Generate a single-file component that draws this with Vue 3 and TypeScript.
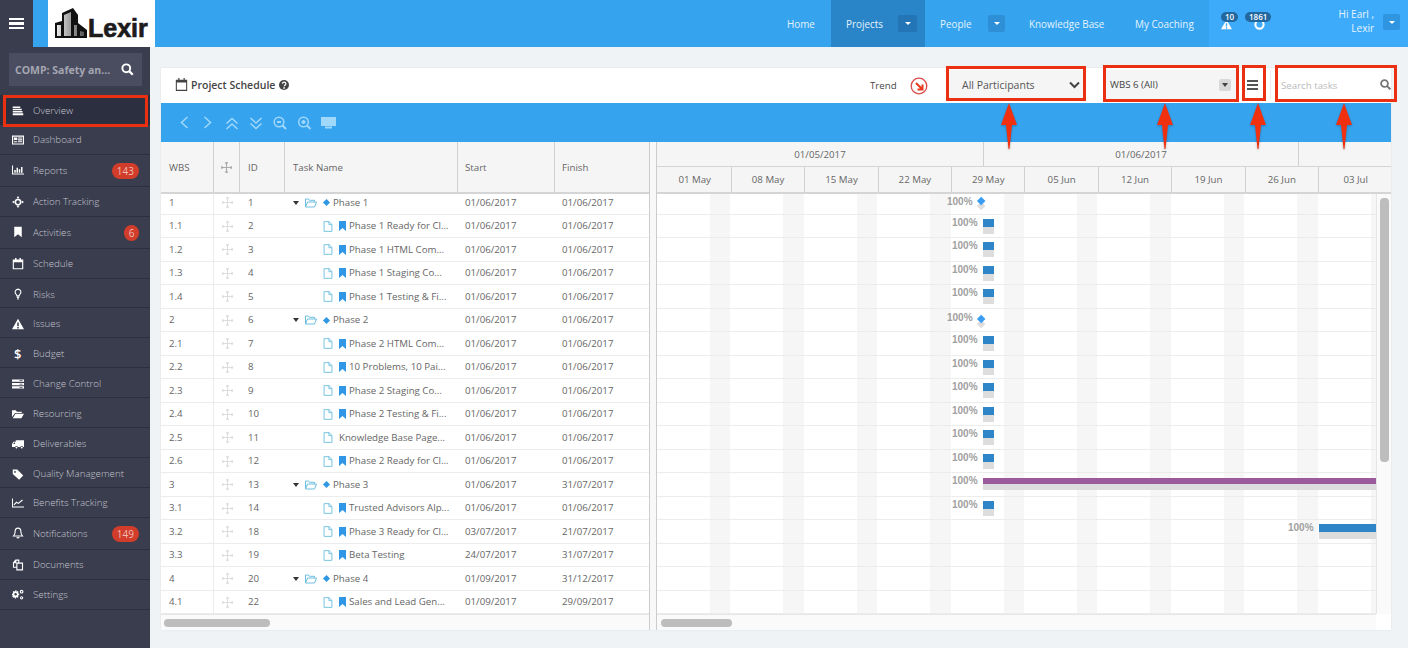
<script setup lang="ts">
interface Nav { label: string; badge?: string; f?: string; s?: string; glyph?: string; active?: boolean }
const nav: Nav[] = [
  { label: 'Overview', active: true, f: 'M1 2h10v2H1zM1 5h12v2H1zM1 8h13v2H1zM1 11h14v2.500H1z' },
  { label: 'Dashboard', f: 'M0 2h16v12H0zM1.500 3.500v9h13v-9zM2.500 4.500h4.500v3.500H2.500zM8 4.500h5.500v1.500H8zM8 7h5.500v1.500H8zM2.500 9.500h4.500v1.500H2.500zM8 9.500h5.500v1.500H8z' },
  { label: 'Reports', badge: '143', f: 'M0 2h1.400v10.600H16V14H0zM3 8h2v3.500H3zM6 5h2v6.500H6zM9 7h2v4.500H9zM12 4h2v7.500h-2z' },
  { label: 'Action Tracking', f: 'M8 0l2 3H6zM8 16l-2-3h4zM0 8l3-2v4zM16 8l-3 2V6zM8 3.500a4.500 4.500 0 1 1 0 9 4.500 4.500 0 0 1 0-9zM8 5.500a2.500 2.500 0 1 0 0 5 2.500 2.500 0 0 0 0-5z' },
  { label: 'Activities', badge: '6', f: 'M3 1h10v14l-5-4-5 4z' },
  { label: 'Schedule', f: 'M4 0h2v2h4V0h2v2h3v13H1V2h3zM2.500 5.500v8h11v-8z' },
  { label: 'Risks', s: 'M8 1.500a4 4 0 0 1 2.500 7c-.7.700-1 1.200-1 2h-3c0-.8-.3-1.300-1-2A4 4 0 0 1 8 1.500zM6.500 12.500h3M7 14.500h2' },
  { label: 'Issues', f: 'M8 1l8 14H0zM7 6v5h2V6zM7 12v2h2v-2z' },
  { label: 'Budget', glyph: '$' },
  { label: 'Change Control', f: 'M0 2h16v3H0zM0 6.500h16v3H0zM0 11h16v3H0zM10 3h4v1h-4zM10 7.500h4v1h-4zM10 12h4v1h-4z' },
  { label: 'Resourcing', f: 'M0 3h5l1.500 2H13v1.500H4L0 12zM4.600 7.500H16L12.500 13.500H1z' },
  { label: 'Deliverables', f: 'M5 3h11v9h-1.100a2 2 0 0 0-3.800 0H7.900a2 2 0 0 0-3.800 0H0V8l2-3h3zM1.500 8H4V6H3zM6 11.500a1.300 1.300 0 1 1 0 2.600 1.300 1.300 0 0 1 0-2.600zM13 11.500a1.300 1.300 0 1 1 0 2.600 1.300 1.300 0 0 1 0-2.600z' },
  { label: 'Quality Management', f: 'M1 2h6l8 8-5.500 5.500L1 8zM4 4a1.200 1.200 0 1 0 0 2.400A1.200 1.200 0 0 0 4 4z' },
  { label: 'Benefits Tracking', f: 'M0 2h1.300v10.700H16V14H0z', s: 'M2.500 10.500L6 7l2.500 1.500L14 4' },
  { label: 'Notifications', badge: '149', s: 'M8 1.500c2.500 0 3.800 2 3.800 4.500 0 3 1 4.500 2.200 6H2c1.200-1.500 2.200-3 2.200-6 0-2.500 1.300-4.500 3.800-4.500zM6.500 13.500c.3 1.300 2.700 1.300 3 0' },
  { label: 'Documents', s: 'M6.500 5.500h7.500v9H6.500zM6.500 11H2V5l3-3.500h4v4M5 1.500V5H2' },
  { label: 'Settings', f: 'M5.500 3l1 .4 1-.7 1.300 1.300-.7 1 .4 1 1.200.3v1.800l-1.200.3-.4 1 .7 1-1.300 1.300-1-.7-1 .4-.3 1.200H3.900l-.3-1.200-1-.4-1 .7-1.300-1.300.7-1-.4-1L0 8V6.200l1.200-.3.400-1-.7-1L2.200 2.600l1 .7 1-.4.300-1.200h1.800zM4.800 5.400a1.700 1.700 0 1 0 0 3.400 1.700 1.700 0 0 0 0-3.400zM12.800 1a2 2 0 1 1 0 5 2 2 0 0 1 0-5zM12.800 2.500a1 1 0 1 0 0 2 1 1 0 0 0 0-2zM12.800 9.500a2.200 2.200 0 1 1 0 4.400 2.200 2.200 0 0 1 0-4.400zM12.800 11a.8.800 0 1 0 0 1.500.8.800 0 0 0 0-1.500z' },
]
interface Row { wbs: string; id: number; name: string; start: string; finish: string; group?: boolean; plain?: boolean; kind: 'm' | 't' | 'p' | 'n'; left?: number; width?: number }
const t = (wbs: string, id: number, name: string, start = '01/06/2017', finish = '01/06/2017', plain = false): Row =>
  ({ wbs, id, name, start, finish, plain, kind: 't', left: 326, width: 11 })
const rows: Row[] = [
  { wbs: '1', id: 1, name: 'Phase 1', start: '01/06/2017', finish: '01/06/2017', group: true, kind: 'm', left: 326 },
  t('1.1', 2, 'Phase 1 Ready for Cl...'),
  t('1.2', 3, 'Phase 1 HTML Com...'),
  t('1.3', 4, 'Phase 1 Staging Co...'),
  t('1.4', 5, 'Phase 1 Testing & Fi...'),
  { wbs: '2', id: 6, name: 'Phase 2', start: '01/06/2017', finish: '01/06/2017', group: true, kind: 'm', left: 326 },
  t('2.1', 7, 'Phase 2 HTML Com...'),
  t('2.2', 8, '10 Problems, 10 Pai...'),
  t('2.3', 9, 'Phase 2 Staging Co...'),
  t('2.4', 10, 'Phase 2 Testing & Fi...'),
  t('2.5', 11, 'Knowledge Base Page...', '01/06/2017', '01/06/2017', true),
  t('2.6', 12, 'Phase 2 Ready for Cl...'),
  { wbs: '3', id: 13, name: 'Phase 3', start: '01/06/2017', finish: '31/07/2017', group: true, kind: 'p', left: 326, width: 400 },
  t('3.1', 14, 'Trusted Advisors Alp...'),
  { ...t('3.2', 18, 'Phase 3 Ready for Cl...', '03/07/2017', '21/07/2017'), left: 662, width: 80 },
  { wbs: '3.3', id: 19, name: 'Beta Testing', start: '24/07/2017', finish: '31/07/2017', kind: 'n' },
  { wbs: '4', id: 20, name: 'Phase 4', start: '01/09/2017', finish: '31/12/2017', group: true, kind: 'n' },
  { wbs: '4.1', id: 22, name: 'Sales and Lead Gen...', start: '01/09/2017', finish: '29/09/2017', kind: 'n' },
]
const weeks = ['01 May', '08 May', '15 May', '22 May', '29 May', '05 Jun', '12 Jun', '19 Jun', '26 Jun', '03 Jul']
const arrows = [1009, 1165, 1258, 1344]
</script>

<template>
  <div class="app">
    <header class="top">
      <button class="burger" aria-label="menu"><i></i><i></i><i></i></button>
      <div class="logo">
        <svg width="32" height="30" viewBox="0 0 32 30">
          <defs>
            <linearGradient id="tower" x1="0" x2="1" y1="0" y2="0">
              <stop offset="0" stop-color="#e8e8e8" />
              <stop offset="1" stop-color="#555" />
            </linearGradient>
          </defs>
          <path fill="#111" d="M0 30V15l7-2V5L18 0l5 7v8l9 7v8z" />
          <path fill="url(#tower)" d="M2 28V17h4v11zM9 28V7l7-3v24zM19 28V17h3v11zM25 28v-5l4 1v4z" />
        </svg>
        <span class="logo-text">Lexir</span>
      </div>
      <nav class="links">
        <a class="link home">Home</a>
        <a class="link projects">Projects<span class="caret-btn"><b></b></span></a>
        <a class="link people">People<span class="caret-btn"><b></b></span></a>
        <a class="link kb">Knowledge Base</a>
        <a class="link coach">My Coaching</a>
      </nav>
      <div class="user">
        <div class="alert">
          <svg width="11" height="11" viewBox="0 0 16 16"><path fill="#fff" d="M8 1l8 14H0zM7 6v5h2V6zM7 12v2h2v-2z" /></svg>
          <span class="pill">10</span>
        </div>
        <div class="alert second">
          <svg width="11" height="11" viewBox="0 0 16 16"><circle cx="8" cy="8" r="6" fill="none" stroke="#fff" stroke-width="3" /></svg>
          <span class="pill">1861</span>
        </div>
        <div class="hi">Hi Earl ,<br />Lexir</div>
        <span class="caret-btn user-caret"><b></b></span>
      </div>
    </header>

    <div class="body">
      <aside class="side">
        <div class="comp">
          <span>COMP: Safety an...</span>
          <svg width="13" height="13" viewBox="0 0 16 16"><circle cx="6.500" cy="6.500" r="4.800" fill="none" stroke="#fff" stroke-width="2.400" /><path d="M10 10l4.500 4.500" stroke="#fff" stroke-width="2.800" /></svg>
        </div>
        <ul class="menu">
          <li v-for="n in nav" :key="n.label" :class="{ active: n.active, tall: n.badge }">
            <span class="mi">
              <span v-if="n.glyph" class="glyph">{{ n.glyph }}</span>
              <svg v-else width="12" height="12" viewBox="0 0 16 16">
                <path v-if="n.f" :d="n.f" fill="#fff" fill-rule="evenodd" />
                <path v-if="n.s" :d="n.s" fill="none" stroke="#fff" stroke-width="1.500" />
              </svg>
            </span>
            <span class="ml">{{ n.label }}</span>
            <span v-if="n.badge" class="badge" :class="{ round: n.badge.length === 1 }">{{ n.badge }}</span>
          </li>
        </ul>
      </aside>

      <main class="content">
        <section class="card">
          <div class="head">
            <svg class="cal" width="13" height="13" viewBox="0 0 16 16"><path fill="#444" fill-rule="evenodd" d="M4 0h1.500v2h5V0H12v2h3v14H1V2h3zM2.300 5.500v9h11.400v-9z" /></svg>
            <span class="title">Project Schedule</span>
            <svg class="help" width="10" height="10" viewBox="0 0 16 16"><circle cx="8" cy="8" r="8" fill="#444" /><path d="M5.500 6c0-3.500 5.500-3.500 5.500 0 0 2-2.500 2-2.500 4" fill="none" stroke="#fff" stroke-width="2" /><rect x="7" y="11.500" width="2.500" height="2.500" fill="#fff" /></svg>
            <span class="trend">Trend</span>
            <svg class="trend-ico" width="18" height="18" viewBox="0 0 18 18"><circle cx="9" cy="9" r="7.800" fill="none" stroke="#dc4a4a" stroke-width="1.300" /><path d="M6 6l5.500 5.500M12.500 7.500v5H7.500" fill="none" stroke="#e8391c" stroke-width="2" /></svg>
            <div class="sel parts">
              <span>All Participants</span>
              <svg width="11" height="8" viewBox="0 0 11 8"><path d="M1 1.500l4.500 4.500L10 1.500" fill="none" stroke="#444" stroke-width="2" /></svg>
            </div>
            <div class="sel wbs">
              <span>WBS 6 (All)</span>
              <span class="wbs-btn"><b></b></span>
            </div>
            <div class="lines"><i></i><i></i><i></i></div>
            <div class="find">
              <span>Search tasks</span>
              <svg width="11" height="11" viewBox="0 0 16 16"><circle cx="6.500" cy="6.500" r="5" fill="none" stroke="#777" stroke-width="2.600" /><path d="M10 10l5 5" stroke="#777" stroke-width="3" /></svg>
            </div>
          </div>

          <div class="bar">
            <svg width="160" height="18" viewBox="0 0 160 18" fill="none" stroke="#a0d8fc" stroke-width="1.500">
              <path d="M9.500 3L3.500 8.500l6 5.500M26.500 3l6 5.500-6 5.500" />
              <path d="M48.500 9.500L54 4.500l5.500 5M48.500 15L54 10l5.500 5M72.500 4l5.500 5 5.500-5M72.500 9.500l5.500 5 5.500-5" />
              <circle cx="101" cy="8" r="4.800" /><path d="M104.500 11.500l3.500 3.500M99 8h4" stroke-width="2" />
              <circle cx="125.500" cy="8" r="4.800" /><path d="M129 11.500l3.500 3.500M123.500 8h4M125.500 6v4" stroke-width="2" />
              <path d="M143 3h15v9h-15z" fill="#a0d8fc" stroke="none" /><path d="M147 13.500h7" stroke-width="2" />
            </svg>
          </div>

          <div class="grids">
            <div class="left">
              <div class="cols thead">
                <div>WBS</div>
                <div class="c">
                  <svg class="move" width="11" height="11" viewBox="0 0 12 12"><path d="M6 0v12M0 6h12M4.500 1.500L6 0l1.500 1.500M4.500 10.500L6 12l1.500-1.500M1.500 4.500L0 6l1.500 1.500M10.500 4.500L12 6l-1.500 1.500" fill="none" stroke="#aaa" stroke-width="1.200" /></svg>
                </div>
                <div>ID</div>
                <div>Task Name</div>
                <div class="d">Start</div>
                <div class="d">Finish</div>
              </div>
              <div class="tbody">
                <div v-for="r in rows" :key="r.id" class="cols trow">
                  <div>{{ r.wbs }}</div>
                  <div class="c">
                    <svg width="11" height="11" viewBox="0 0 12 12"><path d="M6 0v12M0 6h12M4.500 1.500L6 0l1.500 1.500M4.500 10.500L6 12l1.500-1.500M1.500 4.500L0 6l1.500 1.500M10.500 4.500L12 6l-1.500 1.500" fill="none" stroke="#ddd" stroke-width="1.200" /></svg>
                  </div>
                  <div>{{ r.id }}</div>
                  <div class="task" :class="{ group: r.group }">
                    <template v-if="r.group">
                      <span class="tri"></span>
                      <svg class="folder" width="12" height="10" viewBox="0 0 12 10"><path d="M.5 9V1h3l1 1.300h5v1.500M.5 9L2.500 4h9L9.500 9z" fill="none" stroke="#6cbfe0" stroke-width="1" /></svg>
                      <span class="dia"></span>
                    </template>
                    <template v-else>
                      <svg class="file" width="10" height="11" viewBox="0 0 10 12"><path d="M.7.700h5.500L9.300 3.800v7.500H.7zM6 .7V4h3.300" fill="none" stroke="#6cbfe0" stroke-width="1" /></svg>
                      <svg v-if="!r.plain" class="mark" width="7" height="10" viewBox="0 0 7 10"><path d="M0 0h7v10L3.500 7 0 10z" fill="#2f97e6" /></svg>
                    </template>
                    <span class="tname">{{ r.name }}</span>
                  </div>
                  <div class="d">{{ r.start }}</div>
                  <div class="d">{{ r.finish }}</div>
                </div>
              </div>
              <div class="hscroll"><span class="thumb lt"></span></div>
            </div>

            <div class="split"></div>

            <div class="right">
              <div class="ghead">
                <div class="months">
                  <div class="m1">01/05/2017</div>
                  <div class="m2">01/06/2017</div>
                  <div class="m3"></div>
                </div>
                <div class="weeks">
                  <div v-for="w in weeks" :key="w">{{ w }}</div>
                </div>
              </div>
              <div class="gwrap">
                <div class="gantt">
                  <div class="gbody">
                    <div v-for="r in rows" :key="r.id" class="grow">
                      <template v-if="r.kind === 'm'">
                        <span class="pct ms" :style="{ left: (r.left! - 36) + 'px' }">100%</span>
                        <span class="gdia shade" :style="{ left: (r.left! - 4.7) + 'px' }"></span>
                        <span class="gdia" :style="{ left: (r.left! - 4.7) + 'px' }"></span>
                      </template>
                      <template v-else-if="r.kind !== 'n'">
                        <span class="pct" :style="{ left: (r.left! - 31) + 'px' }">100%</span>
                        <span class="gbar" :class="r.kind === 'p' ? 'purple' : 'blue'" :style="{ left: r.left + 'px', width: r.width + 'px' }"></span>
                      </template>
                    </div>
                  </div>
                  <div class="hscroll"><span class="thumb rt"></span></div>
                </div>
                <div class="vscroll">
                  <div class="vtrack"><span class="vthumb"></span></div>
                  <div class="corner"></div>
                </div>
              </div>
            </div>
          </div>
        </section>
      </main>
    </div>

    <div class="mark-box b0"></div>
    <div class="mark-box b1"></div>
    <div class="mark-box b2"></div>
    <div class="mark-box b3"></div>
    <div class="mark-box b4"></div>
    <svg v-for="a in arrows" :key="a" class="arrow" :style="{ left: (a - 10) + 'px' }" width="20" height="46" viewBox="0 0 20 46">
      <path d="M10 0l8 22h-5l-2.500 24h-1L7 22H2z" fill="#f0300f" />
    </svg>
  </div>
</template>

<style>
html, body { margin: 0; background: #f0f3f6; }
</style>

<style scoped>
.app { position: relative; width: 1408px; height: 648px; overflow: hidden; font-family: "Open Sans", sans-serif; font-size: 9.700px; color: #666; background: #f0f3f6; }
.top { display: flex; height: 47px; background: #36a3ee; color: #fff; }
.burger { width: 33px; height: 47px; padding: 0; border: 0; background: #3a3d4e; display: flex; flex-direction: column; gap: 2px; align-items: center; justify-content: center; }
.burger i { display: block; width: 15px; height: 2.500px; background: #fff; }
.logo { width: 107px; margin-left: 15px; background: #fff; display: flex; align-items: flex-end; padding: 0 0 9px 7px; box-sizing: border-box; gap: 1px; }
.logo-text { font-family: "Liberation Sans", sans-serif; font-weight: 700; font-size: 25px; line-height: 20px; color: #1c1c1c; -webkit-text-stroke: 0.700px #1c1c1c; }
.links { display: flex; flex: 1; padding-left: 632px; font-size: 9.900px; color: #e3f3ff; }
.link { display: flex; align-items: center; height: 47px; box-sizing: border-box; flex: none; }
.home { width: 44px; }
.projects { width: 94px; padding-left: 15px; background: #2a85c8; position: relative; }
.people { margin-left: 15px; width: 89px; position: relative; }
.kb { width: 106px; }
.coach { margin-right: 16px; }
.projects .caret-btn { position: absolute; left: 67px; top: 15px; background: #2375b5; width: 19px; height: 17px; }
.people .caret-btn { position: absolute; left: 48px; top: 15px; background: #2f8fd6; width: 17px; height: 17px; }
.caret-btn { display: flex; align-items: center; justify-content: center; border-radius: 2px; }
.caret-btn b { width: 0; height: 0; border: 3px solid transparent; border-top: 3.500px solid #fff; border-bottom: 0; }
.user { position: relative; width: 199px; height: 47px; background: #3eaafa; flex: none; }
.alert { position: absolute; left: 12px; top: 19px; line-height: 0; }
.alert.second { left: 45px; }
.pill { position: absolute; left: 0; top: -7px; padding: 0 4px; height: 10px; line-height: 10px; border-radius: 5px; background: #22689f; font-size: 8px; font-weight: 600; color: #fff; }
.alert.second .pill { left: -9px; }
.hi { position: absolute; right: 34px; top: 8px; text-align: right; font-size: 10px; line-height: 13.500px; color: #e8f5ff; }
.user-caret { position: absolute; left: 174px; top: 14px; width: 17px; height: 16px; background: #2f95e0; }
.body { display: flex; height: 601px; }
.side { width: 150px; flex: none; background: #3a3d4e; }
.comp { margin: 6px 8px 0 9px; height: 33px; display: flex; align-items: center; justify-content: space-between; padding: 0 8px 0 6px; background: #4a4d60; color: #a4a6b2; font-weight: 700; font-size: 10.500px; }
.menu { list-style: none; margin: 9px 0 0; padding: 0; }
.menu li { display: flex; align-items: center; height: 30px; box-sizing: border-box; border-bottom: 1px solid #2c2f3d; color: #c2c4ce; font-size: 9.750px; font-weight: 300; position: relative; }
.menu li.tall { height: 32px; padding-bottom: 1px; }
.menu li:nth-child(7) { height: 29px; }
.menu li:nth-child(n+7):nth-child(-n+13) { padding-top: 2px; }
.menu li.active { background: #2c2f3f; height: 30px; padding-top: 2px; color: #c8cad4; }
.mi { width: 33px; padding-left: 12px; box-sizing: border-box; display: flex; flex: none; line-height: 0; }
.glyph { font-size: 13px; line-height: 14px; font-weight: 600; color: #fff; padding-left: 2px; }
.badge { position: absolute; right: 11px; top: 8px; height: 16px; line-height: 16px; padding: 0 5px; border-radius: 8px; background: #d13c2b; color: #f0bdb5; font-size: 10px; font-weight: 400; }
.badge.round { padding: 0; width: 15px; text-align: center; }
.content { flex: 1; padding: 21px 17px 0 11px; min-width: 0; }
.card { width: 1230px; height: 562px; background: #fff; display: flex; flex-direction: column; box-shadow: 0 0 2px rgba(0, 0, 0, 0.08); }
.head { height: 35px; display: flex; align-items: center; padding: 0 0 2px 14px; box-sizing: border-box; flex: none; }
.cal { margin-right: 3px; flex: none; }
.title { font-weight: 600; font-size: 10.500px; color: #444; width: 84px; margin-right: 4px; white-space: nowrap; flex: none; }
.help { flex: none; }
.trend { margin-left: 581px; width: 40px; padding-top: 1px; color: #444; flex: none; }
.trend-ico { margin-top: 3px; margin-right: 21px; flex: none; }
.sel { height: 29px; background: #f5f5f5; display: flex; align-items: center; justify-content: space-between; box-sizing: border-box; flex: none; }
.parts { width: 134px; padding: 0 3px 0 13px; margin-right: 23px; color: #555; font-size: 10.500px; }
.wbs { width: 130px; padding: 0 5px 0 4px; color: #444; font-size: 9.700px; }
.wbs-btn { width: 12px; height: 12px; border-radius: 2px; background: #d8d8d8; display: flex; align-items: center; justify-content: center; }
.wbs-btn b { width: 0; height: 0; border: 3px solid transparent; border-top: 4px solid #444; border-bottom: 0; }
.lines { margin-left: 11px; width: 11px; display: flex; flex-direction: column; gap: 2px; flex: none; }
.lines i { height: 2px; background: #555; display: block; }
.find { margin-left: 12px; width: 121px; padding-left: 10px; height: 29px; box-sizing: border-box; border-left: 1px solid #eee; display: flex; align-items: center; justify-content: space-between; color: #bbb; flex: none; }
.find span { padding-top: 1px; }
.bar { height: 39px; flex: none; background: #36a3ee; padding: 11px 0 0 17px; box-sizing: border-box; line-height: 0; }
.grids { display: flex; flex: 1; min-height: 0; }
.left { width: 488px; flex: none; display: flex; flex-direction: column; }
.cols { display: grid; grid-template-columns: 53px 26px 45px 173px 97px 94px; }
.thead { height: 52px; position: relative; z-index: 1; background: #f5f5f5; border-bottom: 2px solid #d5d5d5; box-sizing: border-box; color: #666; flex: none; }
.thead > div { display: flex; align-items: center; padding-left: 8px; border-right: 1px solid #d0d0d0; }
.thead > div:last-child { border-right: 0; }
.thead > .c, .trow > .c { padding-left: 0; justify-content: center; }
.tbody { flex: 1; min-height: 0; margin-top: -3px; overflow: hidden; }
.trow { height: 23.500px; box-sizing: border-box; border-bottom: 1px solid #ececec; line-height: 22px; }
.trow > div { padding-left: 8px; padding-top: 1px; display: flex; align-items: center; white-space: nowrap; overflow: hidden; }
.trow > div:first-child { border-right: 1px solid #ececec; }
.thead > .d, .trow > .d { padding-left: 7px; }
.trow > .task { padding-left: 38px; }
.trow > .task.group { padding-left: 8px; }
.tri { width: 0; height: 0; border: 3.500px solid transparent; border-top: 4px solid #333; border-bottom: 0; margin-right: 6px; flex: none; }
.folder { margin-right: 5px; flex: none; }
.dia { width: 5px; height: 5px; background: #2f97e6; transform: rotate(45deg); margin: 0 4px 0 2px; flex: none; }
.file { margin-right: 6px; flex: none; }
.mark { margin-right: 3px; flex: none; }
.hscroll { height: 16px; flex: none; background: #fafafa; border-top: 1px solid #e6e6e6; box-sizing: border-box; display: flex; align-items: center; }
.thumb { height: 8px; border-radius: 4px; background: #bdbdbd; display: block; }
.thumb.lt { width: 106px; margin-left: 3px; }
.thumb.rt { width: 71px; margin-left: 4px; }
.split { width: 8px; flex: none; background: #f8f8f8; border-left: 1px solid #ccc; border-right: 1px solid #ccc; box-sizing: border-box; }
.right { flex: 1; display: flex; flex-direction: column; min-width: 0; }
.ghead { height: 52px; background: #f5f5f5; position: relative; z-index: 1; border-bottom: 2px solid #d5d5d5; box-sizing: border-box; flex: none; overflow: hidden; }
.months { display: flex; height: 25px; border-bottom: 1px solid #d5d5d5; box-sizing: border-box; }
.months > div { display: flex; align-items: center; justify-content: center; border-right: 1px solid #d0d0d0; box-sizing: border-box; }
.m1 { width: 327px; }
.m2 { width: 315px; }
.m3 { flex: 1; border-right: 0 !important; }
.weeks { display: flex; height: 25px; padding-left: 1.500px; }
.weeks > div { width: 73.400px; flex: none; box-sizing: border-box; border-right: 1px solid #d0d0d0; display: flex; align-items: center; justify-content: center; }
.weeks > div:last-child { border-right: 0; }
.gwrap { display: flex; flex: 1; min-height: 0; }
.gantt { width: 719px; flex: none; display: flex; flex-direction: column; }
.gbody { flex: 1; min-height: 0; margin-top: -3px; overflow: hidden; background: repeating-linear-gradient(90deg, transparent 0 53px, #f6f6f6 53px 73.400px); }
.grow { height: 23.500px; box-sizing: border-box; border-bottom: 1px solid #ececec; position: relative; }
.pct { position: absolute; top: 1px; line-height: 13px; font-family: "Liberation Sans", sans-serif; font-weight: 700; font-size: 10px; color: #a0a0a0; }
.pct.ms { top: 2px; }
.grow:first-child .pct { top: 4px; }
.gbar { position: absolute; top: 4px; height: 8px; background: #2e86c9; }
.gbar::after { content: ""; position: absolute; left: 0; right: 0; top: 100%; height: 7px; background: #dddddd; }
.gbar.purple { height: 6px; top: 4.500px; background: #9b5a9b; }
.gbar.purple::after { height: 6px; }
.gdia { position: absolute; top: 7.300px; width: 6.400px; height: 6.400px; background: #3a9cf0; transform: rotate(45deg); }
.gdia.shade { top: 12.300px; background: #ddd; }
.vscroll { flex: 1; display: flex; flex-direction: column; min-width: 0; }
.vtrack { flex: 1; background: #fafafa; border-left: 1px solid #e6e6e6; padding: 4px 0 0 3px; box-sizing: border-box; }
.corner { height: 16px; background: #fff; flex: none; }
.vthumb { display: block; width: 9px; height: 264px; border-radius: 4px; background: #bdbdbd; }
.mark-box { position: absolute; z-index: 2; box-sizing: border-box; border: 3px solid #ea3010; pointer-events: none; }
.b0 { left: 3px; top: 95px; width: 145px; height: 32px; }
.b1 { left: 946px; top: 66px; width: 140px; height: 35px; }
.b2 { left: 1103px; top: 65px; width: 136px; height: 37px; }
.b3 { left: 1242px; top: 65px; width: 24px; height: 36px; }
.b4 { left: 1275px; top: 65px; width: 122px; height: 37px; }
.arrow { position: absolute; z-index: 2; top: 103px; filter: drop-shadow(0 1px 1px rgba(0, 0, 0, 0.25)); }
</style>
